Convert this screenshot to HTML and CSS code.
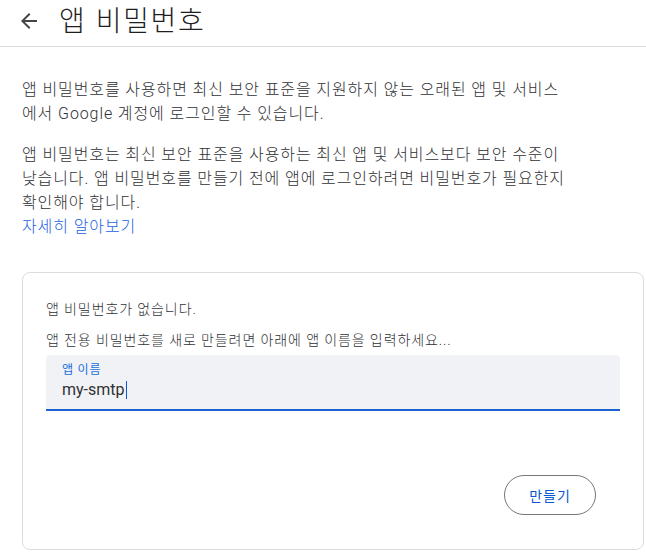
FILE: index.html
```html
<!DOCTYPE html>
<html lang="ko">
<head>
<meta charset="utf-8">
<title>앱 비밀번호</title>
<link rel="stylesheet" href="styles.css">
</head>
<body>
<header class="topbar">
  <button class="back" aria-label="뒤로">
    <svg viewBox="0 -960 960 960" width="24" height="24"><path d="M313-440l224 224-57 56-320-320 320-320 57 56-224 224h487v80H313Z" fill="#444746"/></svg>
  </button>
  <h1 class="title">앱 비밀번호</h1>
</header>
<main class="content">
  <p class="intro">앱 비밀번호를 사용하면 최신 보안 표준을 지원하지 않는 오래된 앱 및 서비스에서 Google 계정에 로그인할 수 있습니다.</p>
  <p class="intro second">앱 비밀번호는 최신 보안 표준을 사용하는 최신 앱 및 서비스보다 보안 수준이 낮습니다. 앱 비밀번호를 만들기 전에 앱에 로그인하려면 비밀번호가 필요한지 확인해야 합니다.<br><a class="link" href="#">자세히 알아보기</a></p>
  <section class="card">
    <p class="card-text">앱 비밀번호가 없습니다.</p>
    <p class="card-text prompt">앱 전용 비밀번호를 새로 만들려면 아래에 앱 이름을 입력하세요...</p>
    <div class="field">
      <div class="field-label">앱 이름</div>
      <div class="field-value">my-smtp<span class="caret"></span></div>
    </div>
    <div class="actions">
      <button class="create">만들기</button>
    </div>
  </section>
</main>
</body>
</html>
```
FILE: styles.css
```css
* { box-sizing: border-box; }
html, body { margin: 0; padding: 0; background: #ffffff; }
body {
  font-family: "Roboto", "Noto Sans CJK KR", sans-serif;
  color: #3c4043;
  width: 646px;
  overflow: hidden;
}
.topbar {
  display: flex;
  align-items: flex-start;
  height: 47px;
  border-bottom: 1px solid #dadce0;
}
.back {
  margin: 9px 0 0 17px;
  width: 24px;
  height: 24px;
  padding: 0;
  border: 0;
  background: none;
  display: flex;
}
.title {
  margin: 0 0 0 18px;
  font-family: "Noto Sans CJK KR", sans-serif;
  font-weight: 300;
  font-size: 28px;
  letter-spacing: 1.6px;
  line-height: 38px;
  color: #1f1f1f;
}
.content {
  padding: 31px 0 0 22px;
  width: 644px;
}
.intro {
  margin: 0;
  max-width: 552px;
  font-size: 16px;
  line-height: 24px;
  letter-spacing: 0.9px;
  font-weight: 300;
  color: #303134;
}
.second { margin-top: 17px; }
.link {
  color: #1a62e0;
  text-decoration: none;
}
.card {
  margin-top: 33px;
  width: 622px;
  border: 1px solid #dadce0;
  border-radius: 8px;
  padding: 26px 23px 34px;
}
.card-text {
  margin: 0;
  font-size: 14px;
  line-height: 20px;
  letter-spacing: 0.9px;
  font-weight: 300;
  color: #303134;
}
.prompt { margin: 11px 0 5px; }
.field {
  background: #f0f2f5;
  border-radius: 4px 4px 0 0;
  border-bottom: 2px solid #1a62d0;
  padding: 7px 16px;
}
.field-label {
  font-size: 12px;
  line-height: 16px;
  letter-spacing: 0.8px;
  color: #1a6ee0;
}
.field-value {
  font-size: 16px;
  line-height: 24px;
  color: #303134;
  display: flex;
  align-items: center;
}
.caret {
  display: inline-block;
  width: 1px;
  height: 18px;
  background: #0b57d0;
  margin-left: 1px;
}
.actions {
  display: flex;
  justify-content: flex-end;
  margin-top: 64px;
  padding-right: 24px;
}
.create {
  width: 92px;
  height: 40px;
  border: 1px solid #747775;
  border-radius: 20px;
  background: #ffffff;
  color: #0b57d0;
  font-family: "Noto Sans CJK KR", sans-serif;
  font-size: 14px;
  font-weight: 400;
  letter-spacing: 1px;
  padding: 0;
}
```
